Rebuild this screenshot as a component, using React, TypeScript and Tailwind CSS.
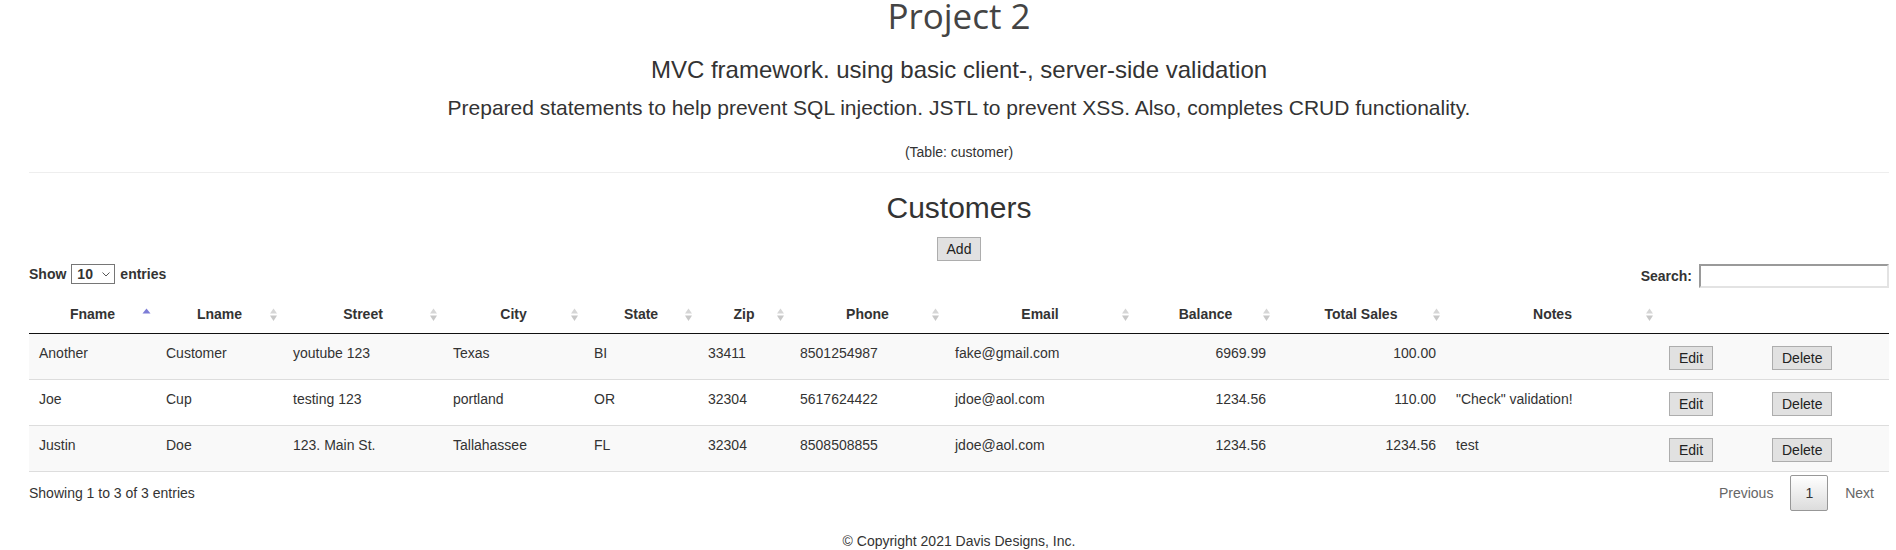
import { useState } from "react"

type Col = { label: string; w: string; sort: "asc" | "both" | "none"; align: "left" | "right" }

const columns: Col[] = [
    { label: "Fname", w: "w-[127px]", sort: "asc", align: "left" },
    { label: "Lname", w: "w-[127px]", sort: "both", align: "left" },
    { label: "Street", w: "w-[160px]", sort: "both", align: "left" },
    { label: "City", w: "w-[141px]", sort: "both", align: "left" },
    { label: "State", w: "w-[114px]", sort: "both", align: "left" },
    { label: "Zip", w: "w-[92px]", sort: "both", align: "left" },
    { label: "Phone", w: "w-[155px]", sort: "both", align: "left" },
    { label: "Email", w: "w-[190px]", sort: "both", align: "left" },
    { label: "Balance", w: "w-[141px]", sort: "both", align: "right" },
    { label: "Total Sales", w: "w-[170px]", sort: "both", align: "right" },
    { label: "Notes", w: "w-[213px]", sort: "both", align: "left" },
    { label: "", w: "w-[103px]", sort: "none", align: "left" },
    { label: "", w: "w-[127px]", sort: "none", align: "left" },
]

const customers = [
    ["Another", "Customer", "youtube 123", "Texas", "BI", "33411", "8501254987", "fake@gmail.com", "6969.99", "100.00", ""],
    ["Joe", "Cup", "testing 123", "portland", "OR", "32304", "5617624422", "jdoe@aol.com", "1234.56", "110.00", "\"Check\" validation!"],
    ["Justin", "Doe", "123. Main St.", "Tallahassee", "FL", "32304", "8508508855", "jdoe@aol.com", "1234.56", "1234.56", "test"],
]

function SortIcon({ kind }: { kind: "asc" | "both" }) {
    return (
        <svg width="19" height="19" viewBox="0 0 19 19" className="absolute right-0 top-1/2 -translate-y-1/2">
            {kind === "asc" ? (
                <polygon points="9.5,3 13.5,8 5.5,8" fill="#7d7dd6" />
            ) : (
                <>
                    <polygon points="9.5,3 13,8 6,8" fill="#d6d6d6" />
                    <polygon points="6,10 13,10 9.5,15.5" fill="#c8c8c8" />
                </>
            )}
        </svg>
    )
}

function GrayButton({ children }: { children: string }) {
    return (
        <button className="h-[24px] px-[9px] bg-[#e1e1e1] border border-[#adadad] text-[14px] leading-[20px] text-[#222]">
            {children}
        </button>
    )
}

function App() {
    const [search, setSearch] = useState("")

    // stripes + row borders, datatables style
    const cellBorders = (r: number) =>
        `${r > 0 ? "border-t border-[#ddd]" : ""} ${r === customers.length - 1 ? "border-b border-[#111]" : ""}`

    return (
        <div className="min-h-[550px] bg-white pl-[29px] pr-[7px] font-['Liberation_Sans',Arial,sans-serif] text-[14px] text-[#333]">
            {/*-------- Page heading --------*/}
            <div className="text-center">
                <h1 className="font-['Open_Sans',sans-serif] text-[35px] leading-[31px] text-[#444]">Project 2</h1>
                <h3 className="mt-[25px] text-[24px] leading-[28px]">MVC framework. using basic client-, server-side validation</h3>
                <h4 className="mt-[12px] text-[21px] leading-[24px]">Prepared statements to help prevent SQL injection. JSTL to prevent XSS. Also, completes CRUD functionality.</h4>
                <p className="mt-[24px] text-[14px] leading-[16px]">(Table: customer)</p>
            </div>
            <hr className="mt-[12px] border-t border-[#eee]" />

            {/*-------- Customers section --------*/}
            <div className="text-center">
                <h2 className="mt-[18px] text-[30px] leading-[34px]">Customers</h2>
                <div className="mt-[12px]">
                    <GrayButton>Add</GrayButton>
                </div>
            </div>

            {/*-------- Length + filter controls --------*/}
            <div className="mt-[3px] h-[32px] flex justify-between items-start">
                <div className="flex items-center gap-[5px] font-bold h-[20px]">
                    <span>Show</span>
                    <div className="relative">
                        <select className="appearance-none w-[44px] h-[20px] border border-[#767676] pl-[5px] font-bold text-[14px] leading-[18px] bg-white">
                            <option>10</option>
                            <option>25</option>
                            <option>50</option>
                            <option>100</option>
                        </select>
                        <svg width="8" height="5" viewBox="0 0 8 5" className="absolute right-[5px] top-[8px] pointer-events-none">
                            <polyline points="0.5,0.5 4,4 7.5,0.5" fill="none" stroke="#555" strokeWidth="1" />
                        </svg>
                    </div>
                    <span>entries</span>
                </div>
                <div className="flex items-center h-[24px] font-bold">
                    <label>Search:</label>
                    <input
                        value={search}
                        onChange={(e) => setSearch(e.target.value)}
                        className="ml-[7px] w-[190px] h-[24px] border-2 border-t-[#9a9a9a] border-l-[#9a9a9a] border-b-[#e3e3e3] border-r-[#e3e3e3] bg-white outline-none font-normal"
                    />
                </div>
            </div>

            {/*-------- Table --------*/}
            <table className="w-full table-fixed border-separate border-spacing-0">
                <colgroup>
                    {columns.map((c, i) => (
                        <col key={i} className={c.w} />
                    ))}
                </colgroup>
                <thead>
                    <tr>
                        {columns.map((c, i) => (
                            <th key={i} className="relative pt-[10px] pb-[11px] px-[18px] text-center font-bold leading-[16px] border-b border-[#111]">
                                {c.label}
                                {c.sort !== "none" && <SortIcon kind={c.sort} />}
                            </th>
                        ))}
                    </tr>
                </thead>
                <tbody>
                    {customers.map((row, r) => (
                        <tr key={r} className={r % 2 === 0 ? "bg-[#f9f9f9]" : "bg-white"}>
                            {row.map((cell, i) => (
                                <td
                                    key={i}
                                    className={`align-top pt-[11px] pb-[10px] px-[10px] leading-[16px] whitespace-nowrap ${columns[i].align === "right" ? "text-right" : "text-left"} ${cellBorders(r)}`}
                                >
                                    {cell}
                                </td>
                            ))}
                            <td className={`align-top pt-[12px] pb-[9px] px-[10px] ${cellBorders(r)}`}>
                                <GrayButton>Edit</GrayButton>
                            </td>
                            <td className={`align-top pt-[12px] pb-[9px] px-[10px] ${cellBorders(r)}`}>
                                <GrayButton>Delete</GrayButton>
                            </td>
                        </tr>
                    ))}
                </tbody>
            </table>

            {/*-------- Info + pagination --------*/}
            <div className="flex justify-between items-start">
                <div className="pt-[11px] leading-[20px]">Showing 1 to 3 of 3 entries</div>
                <div className="pt-[3px] flex items-center leading-[20px]">
                    <span className="px-[14px] py-[7px] border border-transparent text-[#666]">Previous</span>
                    <span className="ml-[2px] px-[14px] py-[7px] border border-[#979797] rounded-[2px] bg-gradient-to-b from-white to-[#dcdcdc] text-[#333]">1</span>
                    <span className="ml-[2px] px-[14px] py-[7px] border border-transparent text-[#666]">Next</span>
                </div>
            </div>

            {/*-------- Footer --------*/}
            <footer className="mt-[20px] text-center leading-[20px]">© Copyright 2021 Davis Designs, Inc.</footer>
        </div>
    )
}

export default App
